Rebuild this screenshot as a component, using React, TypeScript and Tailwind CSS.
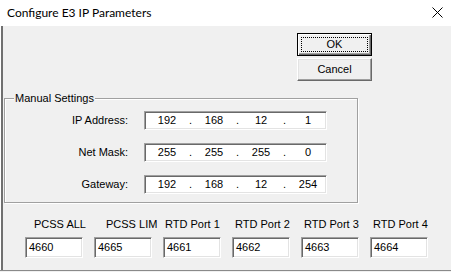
const sunken =
  'bg-white border border-t-[#a0a0a0] border-l-[#a0a0a0] border-b-white border-r-white shadow-[inset_1px_1px_0_#696969,inset_-1px_-1px_0_#e3e3e3]';

const ipRows = [
  { label: 'IP Address:', parts: ['192', '168', '12', '1'] },
  { label: 'Net Mask:', parts: ['255', '255', '255', '0'] },
  { label: 'Gateway:', parts: ['192', '168', '12', '254'] },
];

const ports = [
  { label: 'PCSS ALL', value: '4660', shift: 'pl-[9px]' },
  { label: 'PCSS LIM', value: '4665', shift: 'pl-[12px]' },
  { label: 'RTD Port 1', value: '4661', shift: 'pl-[2px]' },
  { label: 'RTD Port 2', value: '4662', shift: 'pl-[3px]' },
  { label: 'RTD Port 3', value: '4663', shift: 'pl-[3px]' },
  { label: 'RTD Port 4', value: '4664', shift: 'pl-[3px]' },
];

function IpField({ parts }: { parts: string[] }) {
  return (
    <div className={`ml-[16px] w-[183px] h-[19px] flex items-center pl-[4px] ${sunken}`}>
      {parts.map((p, i) => (
        <div key={i} className="flex items-center">
          <span className="w-[36px] text-center">{p}</span>
          {i < 3 && <span className="w-[11px] text-center">.</span>}
        </div>
      ))}
    </div>
  );
}

export default function App() {
  return (
    <div className="w-[451px] h-[272px] overflow-hidden bg-white flex flex-col font-['Liberation_Sans',Arial,sans-serif] text-[11px] leading-[13px] text-black">
      {/* title bar */}
      <div className="h-[26px] shrink-0 flex items-center pl-[7px] pr-[8px]">
        <span className="text-[12px] font-['Lato','Liberation_Sans',sans-serif] leading-[16px]">
          Configure E3 IP Parameters
        </span>
        <svg className="ml-auto -mt-[1px]" width="11" height="11" viewBox="0 0 11 11">
          <path d="M0.5 0.5 L10.5 10.5 M10.5 0.5 L0.5 10.5" stroke="#000" strokeWidth="1" />
        </svg>
      </div>

      {/* client area */}
      <div className="h-[244px] shrink-0 ml-[1px] border-l-2 border-[#707070] bg-[#f0f0f0] flex flex-col">
        <div className="ml-[294px] mt-[7px] flex flex-col gap-[2px]">
          <button className="w-[75px] h-[23px] flex p-[3px] bg-[#f0f0f0] border border-black shadow-[inset_1px_1px_0_#fff,inset_-1px_-1px_0_#696969,inset_-2px_-2px_0_#a0a0a0]">
            <span className="flex-1 flex items-center justify-center border border-dotted border-black">OK</span>
          </button>
          <button className="w-[75px] h-[23px] flex items-center justify-center bg-[#f0f0f0] border border-t-white border-l-white border-b-[#696969] border-r-[#696969] shadow-[inset_-1px_-1px_0_#a0a0a0,inset_1px_1px_0_#e3e3e3]">
            Cancel
          </button>
        </div>

        <fieldset className="mt-[11px] ml-[1px] w-[354px] border border-[#a0a0a0] shadow-[inset_1px_1px_0_#fff,1px_1px_0_#fff] pb-[8px]">
          <legend className="ml-[9px] px-[1px] bg-[#f0f0f0]">Manual Settings</legend>
          <div className="mt-[6px] flex flex-col gap-[13px]">
            {ipRows.map((r) => (
              <div key={r.label} className="flex items-center">
                <div className="w-[123px] text-right">{r.label}</div>
                <IpField parts={r.parts} />
              </div>
            ))}
          </div>
        </fieldset>

        <div className="mt-[15px] ml-[22px] flex gap-[11px]">
          {ports.map((p) => (
            <div key={p.label} className="w-[58px] flex flex-col">
              <div className={`h-[13px] whitespace-nowrap ${p.shift}`}>{p.label}</div>
              <div className={`mt-[6px] h-[21px] flex items-center pl-[3px] ${sunken}`}>{p.value}</div>
            </div>
          ))}
        </div>
      </div>

      <div className="h-[1px] shrink-0 bg-[#8a8a8a]" />
      <div className="h-[1px] shrink-0 bg-[#f0f0f0]" />
    </div>
  );
}
